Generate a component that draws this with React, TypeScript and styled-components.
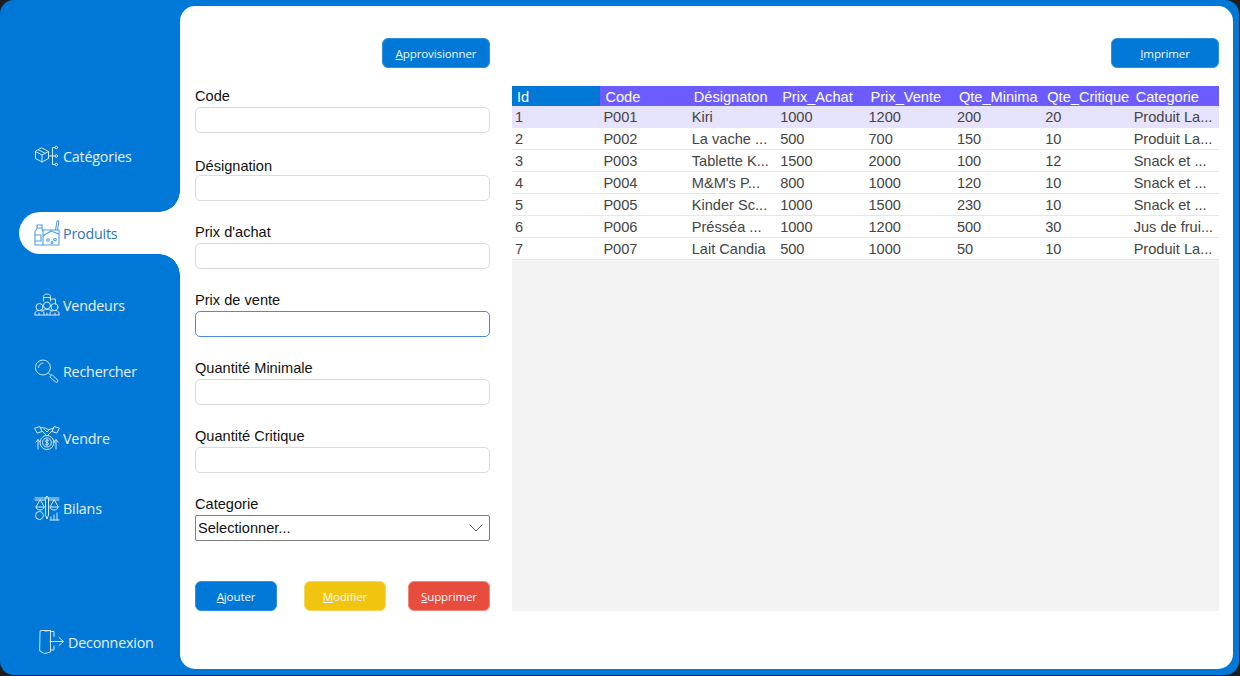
import React from "react";
import styled, { createGlobalStyle } from "styled-components";

const BLUE = "#0078d7";

const GlobalStyle = createGlobalStyle`
  html, body {
    margin: 0;
    background: #1e1e1e;
  }
  * {
    box-sizing: border-box;
  }
`;

const Stage = styled.div`
  width: 1240px;
  height: 676px;
  overflow: hidden;
`;

const Window = styled.div`
  width: 1239px;
  height: 675px;
  display: flex;
  background: ${BLUE};
  border-radius: 14px;
`;

const Sidebar = styled.nav`
  width: 180px;
  flex: none;
  display: flex;
  flex-direction: column;
  padding-top: 135px;
`;

const NavItem = styled.a<{ $gap: number; $active?: boolean; $inset?: number }>`
  position: relative;
  height: 42px;
  flex: none;
  margin-top: ${(p) => p.$gap}px;
  margin-left: 19px;
  padding-left: ${(p) => p.$inset ?? 15}px;
  display: flex;
  align-items: center;
  gap: 4px;
  font-family: "Open Sans", sans-serif;
  font-size: 14.3px;
  letter-spacing: -0.2px;
  color: ${(p) => (p.$active ? "#2b76b8" : "#e6f1fb")};
  background: ${(p) => (p.$active ? "#fff" : "transparent")};
  border-radius: 21px 0 0 21px;

  ${(p) =>
    p.$active &&
    `
    &::before, &::after {
      content: "";
      position: absolute;
      right: 0;
      width: 21px;
      height: 21px;
    }
    &::before {
      top: -21px;
      background: radial-gradient(circle at 0 0, ${BLUE} 20.5px, #fff 21px);
    }
    &::after {
      bottom: -21px;
      background: radial-gradient(circle at 0 100%, ${BLUE} 20.5px, #fff 21px);
    }
  `}
`;

const NavIcon = styled.svg`
  width: 26px;
  height: 26px;
  flex: none;
  margin-right: -1px;
  fill: none;
  stroke: currentColor;
  stroke-width: 1;
  stroke-linejoin: round;
  stroke-linecap: round;
  opacity: 0.92;
`;

const ProductIcon = styled(NavIcon)`
  stroke: #4d9fe6;
  stroke-width: 1.1;
  opacity: 1;
`;

const Panel = styled.main`
  flex: 1;
  margin: 6px 6px 6px 0;
  padding: 32px 14px 0 15px;
  background: #fff;
  border-radius: 15px;
  display: grid;
  grid-template-columns: 295px 707px;
  column-gap: 22px;
  align-content: start;
`;

const Column = styled.section`
  display: flex;
  flex-direction: column;
`;

const Action = styled.button<{ $color?: string; $edge?: string; $width?: number }>`
  width: ${(p) => p.$width ?? 82}px;
  height: 30px;
  padding: 0;
  border: 1px solid ${(p) => p.$edge ?? "#2f93e0"};
  border-radius: 6px;
  background: ${(p) => p.$color ?? BLUE};
  color: #f4f8fc;
  font-family: "Open Sans", sans-serif;
  font-size: 11.5px;
  letter-spacing: -0.1px;
  align-self: flex-end;
`;

const Form = styled.form`
  margin-top: 20px;
  display: flex;
  flex-direction: column;
  gap: 23px;
`;

const Field = styled.div`
  height: 45px;
  display: flex;
  flex-direction: column;
  justify-content: flex-end;
`;

const Label = styled.label<{ $tight?: boolean }>`
  height: 16px;
  margin-bottom: ${(p) => (p.$tight ? 1 : 3)}px;
  font-family: "Liberation Sans", Arial, sans-serif;
  font-size: 14.6px;
  line-height: 16px;
  color: #111;
`;

const TextInput = styled.input<{ $focus?: boolean }>`
  height: 26px;
  width: 100%;
  padding: 0 5px;
  background: #fff;
  border: 1px solid ${(p) => (p.$focus ? "#4f86e0" : "#d8dde3")};
  border-radius: 5px;
  outline: none;
`;

const SelectBox = styled.div`
  height: 26px;
  display: flex;
  align-items: center;
  justify-content: space-between;
  padding: 0 6px 0 2px;
  border: 1px solid #7f7f7f;
  border-radius: 2px;
  font-family: "Liberation Sans", Arial, sans-serif;
  font-size: 14.6px;
  color: #111;
`;

const Chevron = styled.svg`
  width: 14px;
  height: 8px;
  fill: none;
  stroke: #555;
  stroke-width: 1;
`;

const ButtonRow = styled.div`
  margin-top: 40px;
  display: grid;
  grid-template-columns: 109px 104px 82px;
`;

const GridArea = styled.div`
  margin-top: 18px;
  height: 525px;
  background: #f3f3f3;
`;

const Table = styled.table`
  width: 707px;
  table-layout: fixed;
  border-collapse: separate;
  border-spacing: 0;
  font-family: "Liberation Sans", Arial, sans-serif;
  font-size: 14.6px;
`;

const Head = styled.th<{ $corner?: boolean }>`
  height: 20px;
  padding: 1px 0 0 5px;
  text-align: left;
  font-weight: 400;
  color: #fff;
  white-space: nowrap;
  overflow: hidden;
  background: ${(p) => (p.$corner ? BLUE : "#6c5cff")};
`;

const Row = styled.tr<{ $selected?: boolean }>`
  background: ${(p) => (p.$selected ? "#e6e3ff" : "#fff")};
`;

const Cell = styled.td`
  height: 22px;
  padding: 1px 0 0 3px;
  color: #444;
  white-space: nowrap;
  overflow: hidden;
  border-bottom: 1px solid #e6e4f6;
`;

const columns = ["Id", "Code", "Désignaton", "Prix_Achat", "Prix_Vente", "Qte_Minima", "Qte_Critique", "Categorie"];

const rows = [
  ["1", "P001", "Kiri", "1000", "1200", "200", "20", "Produit La..."],
  ["2", "P002", "La vache ...", "500", "700", "150", "10", "Produit La..."],
  ["3", "P003", "Tablette K...", "1500", "2000", "100", "12", "Snack et ..."],
  ["4", "P004", "M&M's P...", "800", "1000", "120", "10", "Snack et ..."],
  ["5", "P005", "Kinder Sc...", "1000", "1500", "230", "10", "Snack et ..."],
  ["6", "P006", "Présséa ...", "1000", "1200", "500", "30", "Jus de frui..."],
  ["7", "P007", "Lait Candia", "500", "1000", "50", "10", "Produit La..."],
];

const fields = ["Code", "Désignation", "Prix d'achat", "Prix de vente", "Quantité Minimale", "Quantité Critique"];

function App() {
  return (
    <Stage>
      <GlobalStyle />
      <Window>
        <Sidebar>
          <NavItem $gap={0}>
            <NavIcon viewBox="0 0 26 26">
              <path d="M8 5l6.500 3.500v7L8 19l-6.500-3.500v-7zM1.500 8.500L8 12l6.500-3.500M8 12v7M4.500 6.800l6.500 3.500" />
              <path d="M21 4.500h-2.500v17H21M15.500 13H21" />
              <circle cx="22.300" cy="4.500" r="1.300" />
              <circle cx="22.300" cy="13" r="1.300" />
              <circle cx="22.300" cy="21.500" r="1.300" />
            </NavIcon>
            Catégories
          </NavItem>
          <NavItem $gap={35} $active>
            <ProductIcon viewBox="0 0 26 26">
              <path d="M3 5h5v3H3zM3.500 8L1 11.500V25h8M7.500 8L9 11" />
              <path d="M1 15h6v6H1" />
              <path d="M9 10h16v15H9zM9 16l8-5 8 3M9 10h13" />
              <path d="M21.500 10l1.500-8.500c.3-1 2-.8 1.800.5L23.500 10" />
              <circle cx="14" cy="20" r="1.300" />
              <circle cx="18" cy="22.500" r="1" />
              <circle cx="21" cy="19.500" r="1.300" />
            </ProductIcon>
            Produits
          </NavItem>
          <NavItem $gap={30}>
            <NavIcon viewBox="0 0 26 26">
              <path d="M9.500 9V4.500c0-1.500 1.500-2.500 3.500-2.500s3.500 1 3.500 2.500V9M9.500 5.500h7M16 7h5.500v5" />
              <circle cx="5.500" cy="15" r="3.500" />
              <circle cx="13" cy="13.500" r="3.500" />
              <circle cx="20.500" cy="15" r="3.500" />
              <path d="M1 23v-2c0-1.500 2-2.500 4.500-2.500S10 19.500 10 21v2M8 19c1-1 3-1.500 5-1.500s4 .5 5 1.500M16 23v-2c0-1.500 2-2.500 4.500-2.500S25 19.500 25 21v2M1 23h24M5 21v2M13 21v2M21 21v2" />
            </NavIcon>
            Vendeurs
          </NavItem>
          <NavItem $gap={24}>
            <NavIcon viewBox="0 0 26 26">
              <circle cx="9" cy="9.500" r="7.500" />
              <path d="M4.500 9.500A4.500 4.500 0 0 1 9 5M14.500 15l2 2M16 18.500l2-2 5.500 5.500a1.400 1.400 0 0 1-2 2z" />
            </NavIcon>
            Rechercher
          </NavItem>
          <NavItem $gap={25}>
            <NavIcon viewBox="0 0 26 26">
              <path d="M1 3l5-1.500 2 5-4.500 1.500zM25 3l-5-1.500-2 5 4.500 1.500zM6 3c3-1 5 0 7 1s4 0 7-1M8 6l5 5 5-5M10 4l3 3 3-3" />
              <circle cx="13" cy="17.500" r="7" />
              <circle cx="13" cy="17.500" r="4.500" />
              <path d="M14.500 15.500c-1-.8-3-.5-3 .8s3 1 3 2.400-2 1.500-3 .7M13 14.500v6M4 24v-9M2 17l2-2.500L6 17M22 24v-9M20 17l2-2.500 2 2.500" />
            </NavIcon>
            Vendre
          </NavItem>
          <NavItem $gap={28}>
            <NavIcon viewBox="0 0 26 26">
              <path d="M1 3h24M1 5h10M15 5h10M13 1.500a1.500 1.500 0 0 1 1.500 1.500v17L13 24l-1.500-4V3A1.500 1.500 0 0 1 13 1.500z" />
              <path d="M6 5l-4 7h8zM20 5l-4 7h8zM2 12c0 2 2 3 4 3s4-1 4-3M16 12c0 2 2 3 4 3s4-1 4-3" />
              <circle cx="5.500" cy="20.500" r="4" />
              <path d="M17 25v-3M20 25v-5M23 25v-7M16 25h9" />
            </NavIcon>
            Bilans
          </NavItem>
          <NavItem $gap={92} $inset={20}>
            <NavIcon viewBox="0 0 26 26">
              <path d="M1 2.500a1 1 0 0 1 1-1h9.500v21.500l-6 1.500a1 1 0 0 1-1-.5L1 22zM6 2l5.500-.5M11.500 2.500H15v5M15 17v4h-3.500" />
              <path d="M11 12.500h13M20 8.500l4.500 4-4.500 4" />
            </NavIcon>
            Deconnexion
          </NavItem>
        </Sidebar>

        <Panel>
          <Column>
            <Action $width={108}>
              <u>A</u>pprovisionner
            </Action>
            <Form>
              {fields.map((name) => (
                <Field key={name}>
                  <Label $tight={name === "Désignation"}>{name}</Label>
                  <TextInput $focus={name === "Prix de vente"} />
                </Field>
              ))}
              <Field>
                <Label>Categorie</Label>
                <SelectBox>
                  Selectionner...
                  <Chevron viewBox="0 0 14 8">
                    <path d="M.5.500L7 7l6.500-6.500" />
                  </Chevron>
                </SelectBox>
              </Field>
            </Form>
            <ButtonRow>
              <Action>
                <u>A</u>jouter
              </Action>
              <Action $color="#f1c40f" $edge="#f5d75c">
                <u>M</u>odifier
              </Action>
              <Action $color="#e74c3c" $edge="#f0877c">
                <u>S</u>upprimer
              </Action>
            </ButtonRow>
          </Column>

          <Column>
            <Action $width={108}>
              <u>I</u>mprimer
            </Action>
            <GridArea>
              <Table>
                <thead>
                  <tr>
                    {columns.map((c, i) => (
                      <Head key={c} $corner={i === 0}>
                        {c}
                      </Head>
                    ))}
                  </tr>
                </thead>
                <tbody>
                  {rows.map((r, i) => (
                    <Row key={r[0]} $selected={i === 0}>
                      {r.map((v, j) => (
                        <Cell key={j}>{v}</Cell>
                      ))}
                    </Row>
                  ))}
                </tbody>
              </Table>
            </GridArea>
          </Column>
        </Panel>
      </Window>
    </Stage>
  );
}

export default App;
